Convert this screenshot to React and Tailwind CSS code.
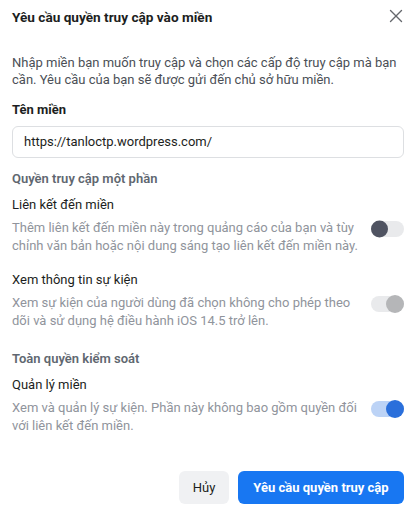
import { X } from "lucide-react";

const Toggle = ({ state }) => {
  if (state === "on") {
    return (
      <div className="relative h-[16px] w-[33px] shrink-0 rounded-full bg-[#bcd3f6]">
        <span className="absolute right-0 top-1/2 h-[18px] w-[18px] -translate-y-1/2 rounded-full bg-[#2a6fdb]" />
      </div>
    );
  }
  if (state === "disabled") {
    return (
      <div className="relative h-[16px] w-[33px] shrink-0 rounded-full bg-[#e9eaec]">
        <span className="absolute right-0 top-1/2 h-[18px] w-[18px] -translate-y-1/2 rounded-full bg-[#b5b6b8]" />
      </div>
    );
  }
  return (
    <div className="relative h-[16px] w-[33px] shrink-0 rounded-full bg-[#e9eaec]">
      <span className="absolute left-0 top-1/2 h-[17px] w-[17px] -translate-y-1/2 rounded-full bg-[#4f5361]" />
    </div>
  );
};

const PermissionRow = ({ title, desc, state }) => (
  <div>
    <div className="text-[13px] leading-[18px] text-[#1c1e21]">{title}</div>
    <div className="mt-[5px] flex items-start justify-between gap-[8px]">
      <p className="flex-1 text-[13px] leading-[18px] text-[#90949c]">{desc}</p>
      <div className="pt-[2px]">
        <Toggle state={state} />
      </div>
    </div>
  </div>
);

export default function App() {
  return (
    <div className="h-[515px] w-[416px] bg-white px-[12px] font-['Roboto',sans-serif]">
      <div className="flex h-[34px] items-center justify-between">
        <h1 className="text-[13.6px] font-bold text-[#1c1e21]">Yêu cầu quyền truy cập vào miền</h1>
        <X className="-mr-[3px] -mt-[3px] h-[22px] w-[22px] text-[#65686d]" strokeWidth={1.5} />
      </div>

      <p className="mt-[20px] text-[13px] leading-[17px] text-[#4b4f56]">
        Nhập miền bạn muốn truy cập và chọn các cấp độ truy cập mà bạn cần. Yêu cầu của bạn sẽ
        được gửi đến chủ sở hữu miền.
      </p>

      <div className="mt-[13px] text-[13px] font-bold leading-[18px] text-[#1c1e21]">Tên miền</div>
      <div className="mt-[7px] flex h-[32px] items-center rounded-[6px] border border-[#dddfe2] px-[11px] text-[13px] text-[#1c1e21]">
        https://tanloctp.wordpress.com/
      </div>

      <div className="mt-[12px] text-[13px] font-semibold leading-[18px] text-[#606770]">
        Quyền truy cập một phần
      </div>
      <div className="mt-[8px] flex flex-col gap-[16px]">
        <PermissionRow
          title="Liên kết đến miền"
          desc="Thêm liên kết đến miền này trong quảng cáo của bạn và tùy chỉnh văn bản hoặc nội dung sáng tạo liên kết đến miền này."
          state="off"
        />
        <PermissionRow
          title="Xem thông tin sự kiện"
          desc="Xem sự kiện của người dùng đã chọn không cho phép theo dõi và sử dụng hệ điều hành iOS 14.5 trở lên."
          state="disabled"
        />
      </div>

      <div className="mt-[20px] text-[13px] font-semibold leading-[18px] text-[#606770]">
        Toàn quyền kiểm soát
      </div>
      <div className="mt-[8px]">
        <PermissionRow
          title="Quản lý miền"
          desc="Xem và quản lý sự kiện. Phần này không bao gồm quyền đối với liên kết đến miền."
          state="on"
        />
      </div>

      <div className="mt-[36px] flex justify-end gap-[9px]">
        <button className="h-[33px] w-[50px] rounded-[6px] bg-[#f0f1f3] text-[13px] font-normal text-[#1c1e21]">
          Hủy
        </button>
        <button className="h-[33px] w-[166px] rounded-[6px] bg-[#1877f2] text-[13px] font-bold text-white">
          Yêu cầu quyền truy cập
        </button>
      </div>
    </div>
  );
}
